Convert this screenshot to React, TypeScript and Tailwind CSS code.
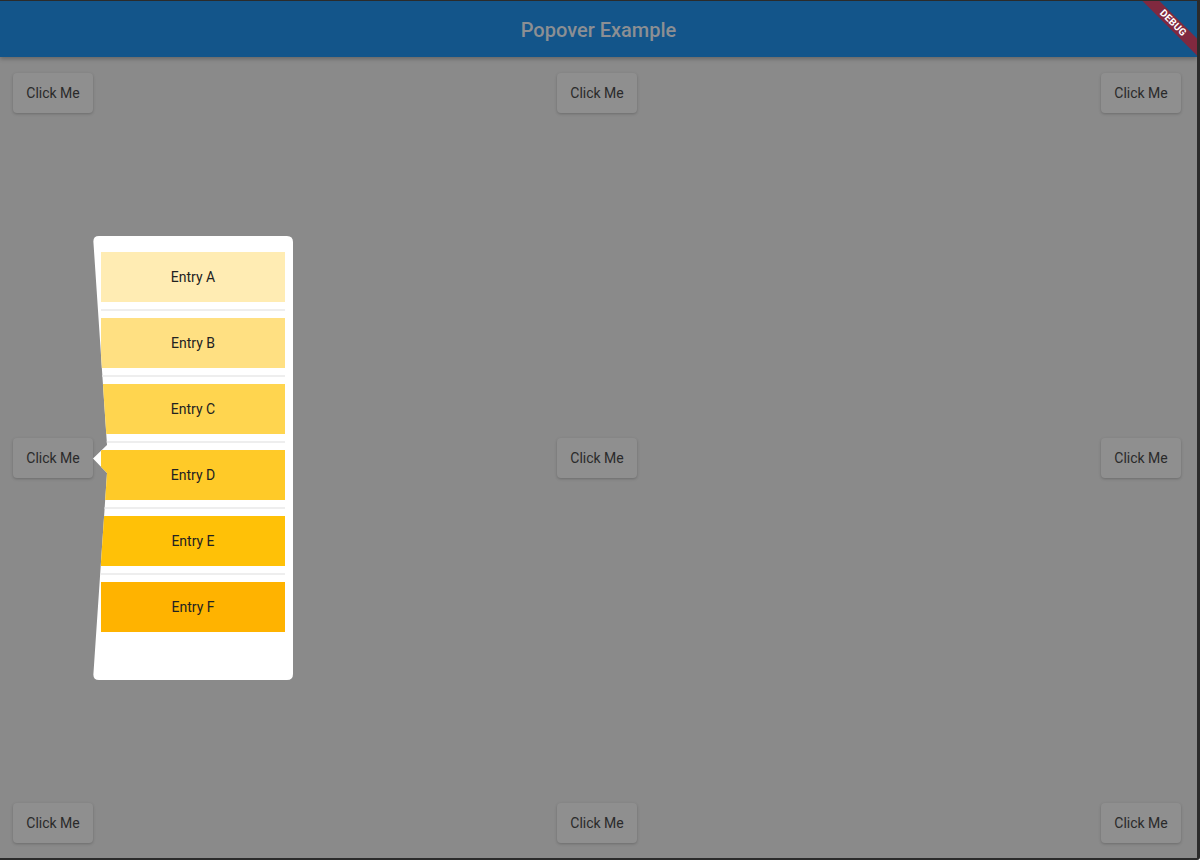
const entries = [
    { label: "Entry A", color: "bg-[#ffecb3]" },
    { label: "Entry B", color: "bg-[#ffe082]" },
    { label: "Entry C", color: "bg-[#ffd54f]" },
    { label: "Entry D", color: "bg-[#ffca28]" },
    { label: "Entry E", color: "bg-[#ffc107]" },
    { label: "Entry F", color: "bg-[#ffb300]" },
];

function ClickButton() {
    return (
        <button className="w-[80px] h-[40px] rounded-[4px] bg-[#8f8f8f] text-[14px] text-[#2a2a2a] shadow-[0_1px_3px_rgba(0,0,0,0.22)] flex items-center justify-center">
            Click Me
        </button>
    );
}

function ButtonRow() {
    return (
        <div className="flex items-center justify-between">
            <ClickButton />
            <ClickButton />
            <ClickButton />
        </div>
    );
}

function Popover() {
    // white card with a slanted left edge and an arrow pointing at the button
    return (
        <div className="absolute left-[93px] top-[235px] w-[200px] h-[444px] bg-white [clip-path:path('M6,0H194Q200,0,200,6V438Q200,444,194,444H6Q0,444,0.4,438L14,237L0,222.5L14,209L0.4,6Q0,0,6,0Z')]">
            <div className="px-[8px] pt-[16px] flex flex-col">
                {entries.map((entry, idx) => (
                    <div key={entry.label}>
                        {idx > 0 && (
                            <div className="h-[16px] flex items-center">
                                <div className="w-full h-[2px] bg-[#eeeeee]" />
                            </div>
                        )}
                        <div
                            className={`h-[50px] flex items-center justify-center text-[14px] text-[#222222] ${entry.color}`}
                        >
                            {entry.label}
                        </div>
                    </div>
                ))}
            </div>
        </div>
    );
}

export default function App() {
    return (
        <div className="w-[1200px] h-[860px] border-t border-r-[3px] border-b-2 border-[#2b2b2b] rounded-br-[3px] bg-[#8a8a8a] flex flex-col relative overflow-hidden font-['Roboto',sans-serif]">
            {/* App bar */}
            <div className="relative h-[56px] shrink-0 bg-[#13558a] shadow-[0_2px_4px_rgba(0,0,0,0.25)] flex items-center justify-center pt-[2px] overflow-hidden z-10">
                <span className="text-[20px] font-medium text-[#8c8f93]">
                    Popover Example
                </span>
                <div className="absolute left-[1123px] top-[16px] w-[100px] h-[12px] rotate-45 bg-[#80293f] flex items-center justify-center">
                    <span className="text-[10px] font-bold text-white leading-none tracking-[0.2px]">
                        DEBUG
                    </span>
                </div>
            </div>

            {/* Body */}
            <div className="flex-1 flex flex-col justify-between pl-[13px] pr-[16px] pt-[16px] pb-[15px]">
                <ButtonRow />
                <ButtonRow />
                <ButtonRow />
            </div>

            <Popover />
        </div>
    );
}
